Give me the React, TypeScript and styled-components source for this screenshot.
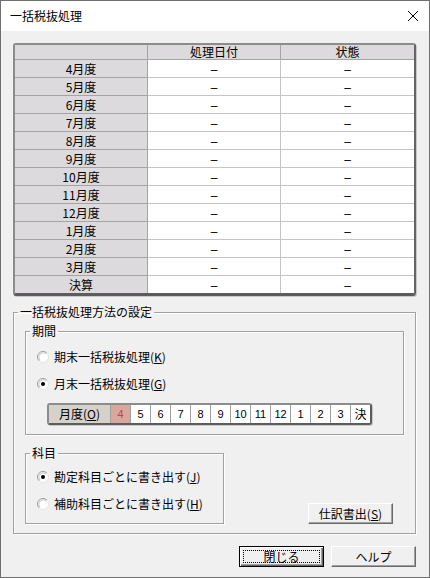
import React from 'react'
import styled, { createGlobalStyle, css } from 'styled-components'

const GlobalStyle = createGlobalStyle`
  html, body {
    margin: 0;
    padding: 0;
    background: #f0f0f0;
  }
  body {
    font-family: "Noto Sans CJK JP", "Liberation Sans", sans-serif;
    font-size: 12px;
    color: #000;
  }
`

const Window = styled.div`
  box-sizing: border-box;
  width: 430px;
  height: 578px;
  border: 1px solid #6f6f6f;
  background: #f0f0f0;
  display: flex;
  flex-direction: column;
`

const TitleBar = styled.div`
  height: 30px;
  background: #fff;
  display: flex;
  align-items: center;
  justify-content: space-between;
  padding: 0 10px 0 9px;
  font-size: 12px;
  line-height: 14px;
`

const Body = styled.div`
  padding: 12px 13px 0 12px;
  display: flex;
  flex-direction: column;
`

const Table = styled.div`
  display: grid;
  grid-template-columns: 133px 133px 133px;
  border-style: solid;
  border-width: 2px 2px 3px 2px;
  border-color: #8c8c8c #646464 #5c5c5c #8c8c8c;
  border-radius: 3px;
  overflow: hidden;
  background: #fff;
  box-shadow: 1px 1px 0 #c8c8c8;
`

const Cell = styled.div<{ $kind: 'head' | 'label' | 'data'; $lastCol?: boolean; $lastRow?: boolean }>`
  box-sizing: border-box;
  height: 18px;
  line-height: 17px;
  text-align: center;
  font-size: 12px;
  background: #fff;
  border-bottom: 1px solid #c4c4c4;
  border-right: 1px solid #c4c4c4;
  ${p => (p.$kind === 'head' || p.$kind === 'label') && css`
    background: #dcdadc;
    border-bottom-color: #a4a4a4;
    border-right-color: #a4a4a4;
  `}
  ${p => p.$kind === 'head' && css`
    height: 15px;
    line-height: 14px;
  `}
  ${p => p.$lastCol && css`border-right: none;`}
  ${p => p.$lastRow && css`border-bottom: none; height: 17px;`}
`

const Dash = styled.span`
  font-family: "Liberation Sans", sans-serif;
`

const Group = styled.fieldset`
  margin: 0;
  padding: 0;
  min-width: 0;
  border: 1px solid #a0a0a0;
  box-shadow: 1px 1px 0 #fff, inset 1px 1px 0 #fff;
`

const Legend = styled.legend`
  margin-left: 4px;
  padding: 0 2px;
  font-size: 12px;
  line-height: 14px;
`

const OuterGroup = styled(Group)`
  margin-top: 9px;
`

const OuterContent = styled.div`
  padding: 5px 11px 9px 11px;
  display: flex;
  flex-direction: column;
`

const PeriodContent = styled.div`
  padding: 12px 0 9px 0;
  display: flex;
  flex-direction: column;
`

const RadioRow = styled.div<{ $gap?: number }>`
  display: flex;
  align-items: center;
  gap: 5px;
  padding-left: 11px;
  height: 14px;
  line-height: 14px;
  margin-bottom: ${p => p.$gap ?? 0}px;
`

const U = styled.span`
  text-decoration: underline;
  text-underline-offset: 1px;
`

const MonthBar = styled.div`
  align-self: flex-start;
  margin-left: 21px;
  display: flex;
  height: 18px;
  border-style: solid;
  border-width: 2px 2px 2px 2px;
  border-color: #8c8c8c #5c5c5c #5c5c5c #8c8c8c;
  border-radius: 3px;
  overflow: hidden;
  background: #fff;
  box-shadow: 1px 1px 0 #c8c8c8;
`

const MonthHead = styled.div`
  width: 61px;
  background: #d6d2ca;
  border-right: 1px solid #a0a0a0;
  text-align: center;
  line-height: 18px;
`

const MonthCell = styled.div<{ $active?: boolean; $last?: boolean }>`
  width: 19px;
  border-right: 1px solid #a0a0a0;
  text-align: center;
  line-height: 18px;
  font-size: 11px;
  font-family: "Liberation Sans", "Noto Sans CJK JP", sans-serif;
  ${p => p.$active && css`
    background: #d9a79d;
    color: #c2404f;
  `}
  ${p => p.$last && css`
    border-right: none;
    font-size: 12px;
    font-family: "Noto Sans CJK JP", sans-serif;
  `}
`

const LowerRow = styled.div`
  margin-top: 11px;
  display: flex;
  justify-content: space-between;
  align-items: flex-end;
`

const AccountGroup = styled(Group)`
  width: 199px;
  box-sizing: border-box;
`

const AccountContent = styled.div`
  padding: 10px 0 12px 0;
  display: flex;
  flex-direction: column;
`

const Button = styled.button<{ $primary?: boolean }>`
  box-sizing: border-box;
  width: 85px;
  height: 21px;
  padding: 0;
  margin: 0;
  font-family: inherit;
  font-size: 12px;
  line-height: 14px;
  color: #000;
  background: #f0f0f0;
  border: 1px solid;
  border-color: #fff #6a6a6a #6a6a6a #fff;
  box-shadow: inset -1px -1px 0 #a0a0a0;
  display: flex;
  align-items: stretch;
  justify-content: center;
  ${p => p.$primary && css`
    border-color: #000;
    box-shadow: inset 1px 1px 0 #fff, inset -1px -1px 0 #6a6a6a, inset -2px -2px 0 #a0a0a0;
    padding: 3px;
  `}
`

const ButtonLabel = styled.span<{ $focus?: boolean }>`
  flex: 1;
  display: flex;
  align-items: center;
  justify-content: center;
  ${p => p.$focus && css`border: 1px dotted #000;`}
`

const ExportButton = styled(Button)`
  margin-right: 11px;
`

const Footer = styled.div`
  margin-top: 12px;
  display: flex;
  justify-content: flex-end;
  gap: 7px;
`

const Radio = ({ checked }: { checked?: boolean }) => (
  <svg width="12" height="12" viewBox="0 0 12 12">
    <circle cx="6" cy="6" r="5.5" fill="#fff" />
    <path d="M2.1 9.9 A5.5 5.5 0 0 1 9.9 2.1" fill="none" stroke="#9a9a9a" />
    <path d="M9.9 2.1 A5.5 5.5 0 0 1 2.1 9.9" fill="none" stroke="#e4e4e4" />
    <path d="M2.9 9.1 A4.4 4.4 0 0 1 9.1 2.9" fill="none" stroke="#c8c8c8" />
    {checked && <circle cx="6" cy="6" r="2" fill="#000" />}
  </svg>
)

const CloseIcon = () => (
  <svg width="12" height="12" viewBox="0 0 12 12">
    <path d="M1 1 L11 11 M11 1 L1 11" stroke="#000" strokeWidth="1" />
  </svg>
)

const months = ['4', '5', '6', '7', '8', '9', '10', '11', '12', '1', '2', '3']
const rows = [...months.map(m => `${m}月度`), '決算']

export default function App() {
  return (
    <>
      <GlobalStyle />
      <Window>
        <TitleBar>
          <span>一括税抜処理</span>
          <CloseIcon />
        </TitleBar>
        <Body>
          <Table>
            <Cell $kind="head" />
            <Cell $kind="head">処理日付</Cell>
            <Cell $kind="head" $lastCol>状態</Cell>
            {rows.map((r, i) => {
              const last = i === rows.length - 1
              return (
                <React.Fragment key={r}>
                  <Cell $kind="label" $lastRow={last}>{r}</Cell>
                  <Cell $kind="data" $lastRow={last}><Dash>–</Dash></Cell>
                  <Cell $kind="data" $lastRow={last} $lastCol><Dash>–</Dash></Cell>
                </React.Fragment>
              )
            })}
          </Table>

          <OuterGroup>
            <Legend>一括税抜処理方法の設定</Legend>
            <OuterContent>
              <Group>
                <Legend>期間</Legend>
                <PeriodContent>
                  <RadioRow $gap={13}>
                    <Radio />
                    <span>期末一括税抜処理(<U>K</U>)</span>
                  </RadioRow>
                  <RadioRow $gap={12}>
                    <Radio checked />
                    <span>月末一括税抜処理(<U>G</U>)</span>
                  </RadioRow>
                  <MonthBar>
                    <MonthHead>月度(<U>O</U>)</MonthHead>
                    {months.map((m, i) => (
                      <MonthCell key={m} $active={i === 0}>{m}</MonthCell>
                    ))}
                    <MonthCell $last>決</MonthCell>
                  </MonthBar>
                </PeriodContent>
              </Group>

              <LowerRow>
                <AccountGroup>
                  <Legend>科目</Legend>
                  <AccountContent>
                    <RadioRow $gap={13}>
                      <Radio checked />
                      <span>勘定科目ごとに書き出す(<U>J</U>)</span>
                    </RadioRow>
                    <RadioRow>
                      <Radio />
                      <span>補助科目ごとに書き出す(<U>H</U>)</span>
                    </RadioRow>
                  </AccountContent>
                </AccountGroup>
                <ExportButton>
                  <ButtonLabel>仕訳書出(<U>S</U>)</ButtonLabel>
                </ExportButton>
              </LowerRow>
            </OuterContent>
          </OuterGroup>

          <Footer>
            <Button $primary>
              <ButtonLabel $focus>閉じる</ButtonLabel>
            </Button>
            <Button>
              <ButtonLabel>ヘルプ</ButtonLabel>
            </Button>
          </Footer>
        </Body>
      </Window>
    </>
  )
}
